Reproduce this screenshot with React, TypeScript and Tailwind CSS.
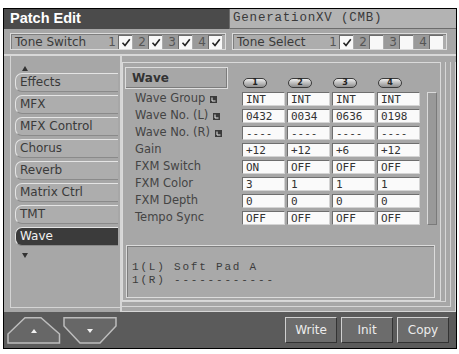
import React from "react";

const tabs = ["Effects", "MFX", "MFX Control", "Chorus", "Reverb", "Matrix Ctrl", "TMT", "Wave"];

const rows = [
  { label: "Wave Group", icon: true, vals: ["INT", "INT", "INT", "INT"] },
  { label: "Wave No. (L)", icon: true, vals: ["0432", "0034", "0636", "0198"] },
  { label: "Wave No. (R)", icon: true, vals: ["----", "----", "----", "----"] },
  { label: "Gain", icon: false, vals: ["+12", "+12", "+6", "+12"] },
  { label: "FXM Switch", icon: false, vals: ["ON", "OFF", "OFF", "OFF"] },
  { label: "FXM Color", icon: false, vals: ["3", "1", "1", "1"] },
  { label: "FXM Depth", icon: false, vals: ["0", "0", "0", "0"] },
  { label: "Tempo Sync", icon: false, vals: ["OFF", "OFF", "OFF", "OFF"] },
];

function Check() {
  return (
    <svg width="10" height="9" viewBox="0 0 10 9">
      <path d="M1.5 4.8 L4 7.5 L8.8 1.2" fill="none" stroke="#222" strokeWidth="1.6" />
    </svg>
  );
}

function ToneGroup({ label, on, className }: { label: string; on: boolean[]; className: string }) {
  return (
    <div
      className={`${className} flex h-[17px] items-center border border-[#dcdcdc] bg-[#adadad] pl-[4px] pr-[3px] shadow-[inset_1px_1px_0_#7e7e7e]`}
    >
      <span className="text-[12px] leading-none text-[#3a3a3a]">{label}</span>
      <div className="ml-auto flex gap-[1px]">
        {on.map((c, i) => (
          <div key={i} className="flex">
            <span
              className={`flex h-[14px] w-[15px] items-center justify-end pr-[2px] text-[12px] leading-none text-[#555] ${
                i > 0 ? "bg-[#9a9a9a]" : ""
              }`}
            >
              {i + 1}
            </span>
            <span className="flex h-[14px] w-[14px] items-center justify-center border-l border-t border-[#6c6c6c] bg-[#f8f8f8]">
              {c && <Check />}
            </span>
          </div>
        ))}
      </div>
    </div>
  );
}

// small inverted "L" marker after wave labels
function LMark() {
  return (
    <svg width="7" height="7" viewBox="0 0 7 7" className="ml-[5px] shrink-0">
      <rect width="7" height="7" fill="#3a3a3a" />
      <path d="M2 1.5 V5 H5.5" fill="none" stroke="#e8e8e8" strokeWidth="1" />
    </svg>
  );
}

export default function App() {
  return (
    <div className="h-[354px] w-[459px] bg-white pl-[3px] pt-[8px] font-['DejaVu_Sans',sans-serif]">
      <div className="flex h-[341px] w-[454px] flex-col border border-black bg-[#a7a7a7]">
        {/* title bar */}
        <div className="flex h-[20px]">
          <div className="flex w-[225px] items-center bg-[#4b4b4b] pl-[6px] font-['Liberation_Sans',sans-serif] text-[14.5px] font-bold text-white">
            Patch Edit
          </div>
          <div className="flex flex-1 items-center border-b border-l border-[#6c6c6c] bg-[#b3b3b3] pl-[3px] font-['Liberation_Mono',monospace] text-[12.5px] leading-none tracking-[0.8px] text-[#3a3a3a]">
            GenerationXV (CMB)
          </div>
        </div>

        {/* tone switch / select */}
        <div className="flex h-[27px] gap-[6px] border-b-2 border-[#d8d8d8] pl-[6px] pt-[4px]">
          <ToneGroup className="w-[216px]" label="Tone Switch" on={[true, true, true, true]} />
          <ToneGroup className="w-[215px]" label="Tone Select" on={[true, false, false, false]} />
        </div>

        {/* main */}
        <div className="flex h-[256px]">
          {/* sidebar */}
          <div className="w-[116px] pb-[4px] pl-[6px]">
            <div className="flex h-full flex-col border-b border-l border-[#d4d4d4] pl-[4px] pt-[10px]">
              <div className="h-[7px] pl-[7px]">
                <svg width="6" height="5" viewBox="0 0 6 5">
                  <path d="M0 5 L3 0 L6 5 Z" fill="#333" />
                </svg>
              </div>
              <div className="flex flex-col gap-[3px]">
                {tabs.map((t) => {
                  const sel = t === "Wave";
                  return (
                    <div
                      key={t}
                      className={`h-[19px] w-[103px] rounded-l-[7px] border-b border-l border-t pl-[4px] text-[12px] leading-[17px] ${
                        sel
                          ? "border-b-[#8a8a8a] border-l-[#e4e4e4] border-t-[#e4e4e4] bg-[#3b3b3b] text-[#f2f2f2]"
                          : "border-b-[#8a8a8a] border-l-[#e4e4e4] border-t-[#e4e4e4] bg-[#adadad] text-[#3a3a3a]"
                      }`}
                    >
                      {t}
                    </div>
                  );
                })}
              </div>
              <div className="mt-[7px] pl-[7px]">
                <svg width="6" height="5" viewBox="0 0 6 5">
                  <path d="M0 0 L6 0 L3 5 Z" fill="#333" />
                </svg>
              </div>
            </div>
          </div>

          {/* content */}
          <div className="w-[336px] border-l-2 border-[#d6d6d6] pt-[6px]">
            <div className="h-full border-b border-r border-[#d6d6d6] pb-[4px] pr-[4px]">
              <div className="h-full border-b border-r border-[#d6d6d6] pb-[4px] pr-[4px]">
                <div className="h-full border-b border-r border-[#d6d6d6] pr-[4px]">
                  <div className="h-full border border-[#dadada] bg-[#a7a7a7]">
                    <div className="ml-[2px] mt-[4px] flex flex-col">
                      {/* header */}
                      <div className="flex h-[25px]">
                        <div className="w-[117px]">
                          <div className="flex h-[22px] w-[103px] items-center border border-[#dedede] pl-[6px] text-[12px] font-bold text-[#333] shadow-[inset_-1px_-1px_0_#7c7c7c]">
                            Wave
                          </div>
                        </div>
                        <div className="flex gap-[2px]">
                          {[1, 2, 3, 4].map((n) => (
                            <div key={n} className="w-[43px] pl-[1px] pt-[11px]">
                              <span className="flex h-[10px] w-[24px] items-center justify-center rounded-full border-[1.5px] border-[#3a3a3a] bg-linear-to-b from-[#eeeeee] to-[#8e8e8e] text-[8px] font-bold leading-none text-[#222]">
                                {n}
                              </span>
                            </div>
                          ))}
                        </div>
                      </div>

                      {/* rows */}
                      <div className="flex">
                        <div className="flex flex-col gap-[3px]">
                          {rows.map((r) => (
                            <div key={r.label} className="flex h-[14px]">
                              <div className="flex w-[117px] items-center pl-[10px] text-[11.5px] leading-none text-[#444]">
                                <span>{r.label}</span>
                                {r.icon && <LMark />}
                              </div>
                              <div className="flex gap-[2px]">
                                {r.vals.map((v, i) => (
                                  <div
                                    key={i}
                                    className="flex h-[14px] w-[43px] items-center border-b border-l border-r border-t border-b-[#d4d4d4] border-l-[#6e6e6e] border-r-[#d4d4d4] border-t-[#6e6e6e] bg-[#fafafa] pl-[3px] font-['DejaVu_Sans_Mono',monospace] text-[11px] leading-none text-[#333]"
                                  >
                                    {v}
                                  </div>
                                ))}
                              </div>
                            </div>
                          ))}
                        </div>
                        <div className="ml-[7px] h-[133px] w-[10px] border-b border-l border-r border-t border-b-[#7a7a7a] border-l-[#dadada] border-r-[#7a7a7a] border-t-[#dadada] bg-[#999999]" />
                      </div>

                      {/* wave name display */}
                      <div className="ml-[1px] mt-[20px] flex h-[53px] w-[309px] flex-col gap-[1px] border border-[#dcdcdc] bg-[#a9a9a9] pl-[5px] pt-[15px] font-['Liberation_Mono',monospace] text-[11px] leading-[12px] tracking-[1.8px] whitespace-pre text-[#3c3c3c] shadow-[inset_1px_1px_0_#7e7e7e]">
                        <div>1(L) Soft Pad A</div>
                        <div>1(R) ------------</div>
                      </div>
                    </div>
                  </div>
                </div>
              </div>
            </div>
          </div>
        </div>

        {/* bottom bar */}
        <div className="flex h-[36px] items-start bg-[#5b5b5b] pl-[3px] pr-[7px] pt-[5px]">
          <div className="flex gap-[2px]">
            <svg width="54" height="27" viewBox="0 0 54 27">
              <path d="M18 0.75 L34 0.75 L52.5 17 L52.5 26 L1 26 L1 17 Z" fill="#676767" stroke="#bdbdbd" strokeWidth="1.5" />
              <path d="M24 16 L30 16 L27 12 Z" fill="#f2f2f2" />
            </svg>
            <svg width="54" height="27" viewBox="0 0 54 27">
              <path d="M1 0.75 L53 0.75 L53 9 L37 26 L17 26 L1 9 Z" fill="#676767" stroke="#bdbdbd" strokeWidth="1.5" />
              <path d="M24 12 L30 12 L27 16 Z" fill="#f2f2f2" />
            </svg>
          </div>
          <div className="ml-auto flex gap-[4px]">
            {["Write", "Init", "Copy"].map((b) => (
              <div
                key={b}
                className="flex h-[26px] w-[52px] items-center justify-center border-b border-l border-r border-t border-b-[#333] border-l-[#d0d0d0] border-r-[#333] border-t-[#d0d0d0] bg-[#6c6c6c] text-[12px] text-[#ececec]"
              >
                {b}
              </div>
            ))}
          </div>
        </div>
      </div>
    </div>
  );
}
